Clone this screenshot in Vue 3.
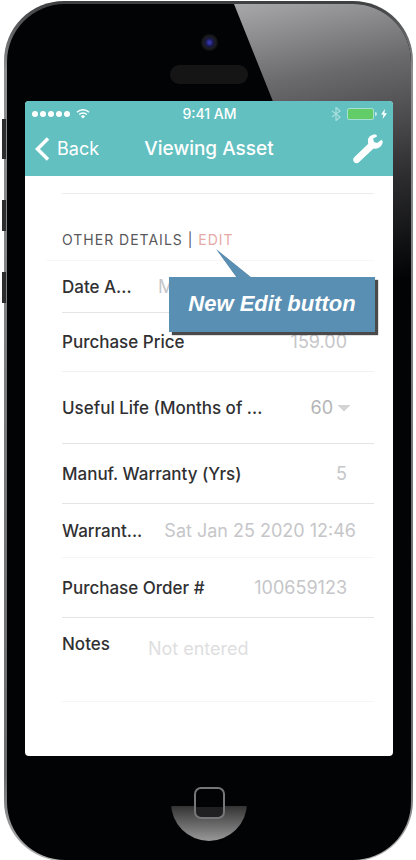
<template>
  <div class="stage">
    <span class="side-key mute"></span>
    <span class="side-key up"></span>
    <span class="side-key down"></span>

    <div class="phone">
      <div class="face">
        <div class="glare"></div>

        <div class="forehead">
          <span class="camera"></span>
          <span class="speaker"></span>
        </div>

        <main class="screen">
          <header class="header">
            <div class="status">
              <div class="signal">
                <i v-for="n in 5" :key="n" class="dot"></i>
                <svg class="wifi" viewBox="0 0 14 11" aria-hidden="true">
                  <path d="M1 4.2a8.6 8.6 0 0 1 12 0M3.2 6.5a5.5 5.5 0 0 1 7.6 0" />
                  <path class="wifi-base" d="M4.8 8.2a3.3 3.3 0 0 1 4.4 0L7 10.6z" />
                </svg>
              </div>
              <span class="time">9:41 AM</span>
              <div class="power">
                <svg class="bluetooth" viewBox="0 0 10 14" aria-hidden="true">
                  <path d="M1 4l8 6-4 3.5V.5L9 4l-8 6" />
                </svg>
                <span class="battery"></span>
                <svg class="bolt" viewBox="0 0 6 10" aria-hidden="true">
                  <path d="M4 0L0 5.6h2.4L1.6 10 6 4.2H3.4z" />
                </svg>
              </div>
            </div>

            <nav class="nav">
              <button type="button" class="back">
                <svg viewBox="0 0 15 24" aria-hidden="true">
                  <path d="M13 1.5L2.500 12 13 22.5" />
                </svg>
                Back
              </button>
              <h1>Viewing Asset</h1>
              <button type="button" class="tools" aria-label="Tools">
                <svg viewBox="0 0 30 30" aria-hidden="true">
                  <path
                    d="M23.600.9c-3.800-1.200-8 1.300-8.600 5.100-.2 1.500-.1 2.600.3 3.800L1.500 23c-2 2-1.500 4-.3 5.300 1.400 1.300 3.600 1.200 5-.3l14.300-13.400c4.500 1 8.800-2 9.300-7l-1.400-1.900-4.200 3.300-3.200-1-.9-3.400 3.900-2.100z"
                  />
                </svg>
              </button>
            </nav>
          </header>

          <section class="details">
            <div class="previous"></div>
            <h2>
              OTHER DETAILS |
              <button type="button" class="edit">EDIT</button>
            </h2>

            <div class="callout">
              <svg viewBox="0 0 40 29" aria-hidden="true">
                <path d="M0 0L36 29H21z" />
              </svg>
              <p>New Edit button</p>
            </div>

            <div
              v-for="field in fields"
              :key="field.id"
              class="row"
              :class="[field.id, field.type]"
            >
              <label :for="field.id">{{ field.label }}</label>
              <select v-if="field.type === 'select'" :id="field.id">
                <option>{{ field.value }}</option>
              </select>
              <textarea
                v-else-if="field.type === 'notes'"
                :id="field.id"
                :placeholder="field.placeholder"
                rows="1"
                readonly
              ></textarea>
              <input v-else :id="field.id" type="text" :value="field.value" readonly />
            </div>
          </section>
        </main>

        <div class="chin">
          <button type="button" class="home" aria-label="Home">
            <span></span>
          </button>
        </div>
      </div>
    </div>
  </div>
</template>

<script setup>
const fields = [
  { id: "acquired", type: "date", label: "Date A...", value: "Mon Jan 25 2016 12:46" },
  { id: "price", type: "text", label: "Purchase Price", value: "159.00" },
  { id: "life", type: "select", label: "Useful Life (Months of ...", value: "60" },
  { id: "warranty", type: "text", label: "Manuf. Warranty (Yrs)", value: "5" },
  { id: "expiry", type: "date", label: "Warrant...", value: "Sat Jan 25 2020 12:46" },
  { id: "order", type: "text", label: "Purchase Order #", value: "100659123" },
  { id: "notes", type: "notes", label: "Notes", placeholder: "Not entered" }
]
</script>

<style>
body {
  margin: 0;
  background: #fff;
}
</style>

<style scoped>
* {
  box-sizing: border-box;
}

.stage {
  position: relative;
  padding: 1px 3px 0 4px;
  font-family: Inter, "Liberation Sans", sans-serif;
}

button {
  padding: 0;
  border: none;
  background: none;
  font: inherit;
  color: inherit;
  cursor: pointer;
}

/* phone body */
.phone {
  padding: 3px 2px 1px 3px;
  border-radius: 60px;
  background: linear-gradient(#3c3e3f, #8c8e90 8%, #77797b 50%, #6a6c6e 90%, #b4b4b4);
}

.face {
  position: relative;
  padding: 0 18px;
  border-radius: 58px;
  background: #020305;
  overflow: hidden;
}

.side-key {
  position: absolute;
  left: 2px;
  width: 4px;
  background: #2c2c2e;
}

.mute {
  top: 119px;
  height: 40px;
}

.up {
  top: 200px;
  height: 31px;
}

.down {
  top: 272px;
  height: 31px;
}

.glare {
  position: absolute;
  top: 0;
  right: 0;
  width: 177px;
  height: 300px;
  background: linear-gradient(168deg, #a8a8aa, #6a6a6d 26%, #4c4c4f 44%, #2c2c2e 62%, #020305 92%);
  clip-path: polygon(0 0, 100% 0, 100% 100%, 120px 100%);
}

.forehead {
  position: relative;
  display: flex;
  flex-direction: column;
  align-items: center;
  gap: 14px;
  height: 97px;
  padding-top: 30px;
}

.camera {
  width: 17px;
  height: 17px;
  border-radius: 50%;
  background: radial-gradient(circle, #3436a8 0 1px, #171746 4px, #1d1e22 6px, #101114 8px);
}

.speaker {
  width: 78px;
  height: 19px;
  border-radius: 10px;
  background: #161516;
}

.screen {
  position: relative;
  border-radius: 4px;
  background: #fff;
  overflow: hidden;
}

/* header */
.header {
  height: 75px;
  background: #62c0c0;
  color: #fff;
}

.status {
  display: grid;
  grid-template-columns: 1fr auto 1fr;
  align-items: center;
  height: 25px;
  padding: 0 6px 0 7px;
}

.signal,
.power {
  display: flex;
  align-items: center;
}

.signal {
  gap: 2px;
}

.dot {
  width: 6px;
  height: 6px;
  border-radius: 50%;
  background: #fff;
}

.wifi {
  width: 14px;
  height: 11px;
  margin-left: 4px;
  fill: none;
  stroke: #fff;
  stroke-width: 1.5;
}

.wifi .wifi-base {
  fill: #fff;
  stroke: none;
}

.time {
  font-size: 14px;
  font-weight: 500;
}

.power {
  justify-content: flex-end;
}

.bluetooth {
  width: 10px;
  height: 14px;
  margin-right: 6px;
  fill: none;
  stroke: #a9dede;
  stroke-width: 1.2;
}

.battery {
  position: relative;
  width: 27px;
  height: 12px;
  margin-right: 7px;
  border: 1px solid #a6e0d5;
  border-radius: 2px;
  background: #62cc68;
}

.battery::after {
  content: "";
  position: absolute;
  top: 3px;
  right: -4px;
  width: 2px;
  height: 4px;
  border-radius: 0 2px 2px 0;
  background: #c5eaea;
}

.bolt {
  width: 6px;
  height: 10px;
  fill: #fff;
}

.nav {
  display: grid;
  grid-template-columns: 1fr auto 1fr;
  align-items: center;
  height: 46px;
  padding: 0 10px;
}

.back {
  display: flex;
  align-items: center;
  gap: 7px;
  font-size: 18px;
  line-height: 24px;
}

.back svg {
  width: 15px;
  height: 24px;
  fill: none;
  stroke: #fff;
  stroke-width: 3.5;
}

h1 {
  margin: 0;
  font-size: 19px;
  line-height: 26px;
  font-weight: 500;
}

.tools {
  justify-self: end;
  height: 30px;
}

.tools svg {
  display: block;
  width: 30px;
  height: 30px;
  fill: #fff;
}

/* asset fields */
.details {
  position: relative;
  padding: 0 19px 54px 37px;
}

.previous {
  height: 18px;
  border-bottom: 1px solid #ededed;
}

h2 {
  height: 67px;
  margin: 0 0 0 -16px;
  padding: 36px 0 0 16px;
  border-bottom: 1px solid #f7f7f7;
  font-size: 14px;
  line-height: 20px;
  font-weight: 400;
  letter-spacing: 1px;
  color: #58585b;
}

.edit {
  letter-spacing: inherit;
  color: #e6a9a5;
}

.row {
  display: flex;
  align-items: center;
  gap: 8px;
  height: 60px;
  border-bottom: 1px solid #e4e4e4;
  font-size: 18px;
  line-height: 24px;
}

.row label {
  flex: none;
  font-size: 17px;
  font-weight: 500;
  white-space: nowrap;
  color: #303032;
}

.row input,
.row select,
.row textarea {
  flex: 1;
  min-width: 0;
  margin: 0;
  padding: 0 27px 0 0;
  border: none;
  outline: none;
  background: none;
  font: inherit;
  text-align: right;
  color: #c6c6c9;
}

.row.date {
  height: 52px;
}

.row.date input {
  padding-right: 18px;
}

.row.price {
  height: 59px;
  border-color: #f1f1f1;
}

.row.select {
  height: 72px;
}

.row select {
  appearance: none;
  padding-right: 41px;
  background: conic-gradient(from 315deg at 50% 100%, #d4d4d4 90deg, transparent 0) right 24px top 9px / 12px 6px no-repeat;
  color: #b4b4b7;
}

.row.expiry {
  height: 54px;
  border-color: #f5f5f5;
}

.row.notes {
  align-items: flex-start;
  gap: 38px;
  height: 84px;
  padding-top: 14px;
  border-color: #f5f5f5;
}

.row textarea {
  height: 30px;
  padding: 5px 0 0;
  text-align: left;
  resize: none;
  overflow: hidden;
}

.row textarea::placeholder {
  color: #dedee0;
}

/* callout pointing at the edit button */
.callout {
  position: absolute;
  top: 101px;
  right: 18px;
  z-index: 1;
  width: 206px;
}

.callout svg {
  position: absolute;
  top: -28px;
  left: 47px;
  width: 40px;
  height: 29px;
  fill: #5a8fb4;
  filter: drop-shadow(1px 1px 0 #888);
}

.callout p {
  position: relative;
  margin: 0;
  padding: 13px 0 14px;
  background: #5a8fb4;
  box-shadow: 3px 3px 1px #4a4a4a;
  font-family: "Liberation Sans", Arial, sans-serif;
  font-size: 22px;
  line-height: 28px;
  font-weight: 700;
  font-style: italic;
  text-align: center;
  color: #fff;
}

/* home button */
.chin {
  display: flex;
  justify-content: center;
  height: 104px;
  padding-top: 9px;
}

.home {
  display: grid;
  place-items: center;
  width: 76px;
  height: 76px;
  border-radius: 50%;
  background: linear-gradient(transparent 41px, #333334 41px, #999 100%);
}

.home span {
  width: 31px;
  height: 32px;
  border: 2px solid #77777a;
  border-radius: 7px;
  background: linear-gradient(#020305 18px, #202022 18px);
}
</style>
